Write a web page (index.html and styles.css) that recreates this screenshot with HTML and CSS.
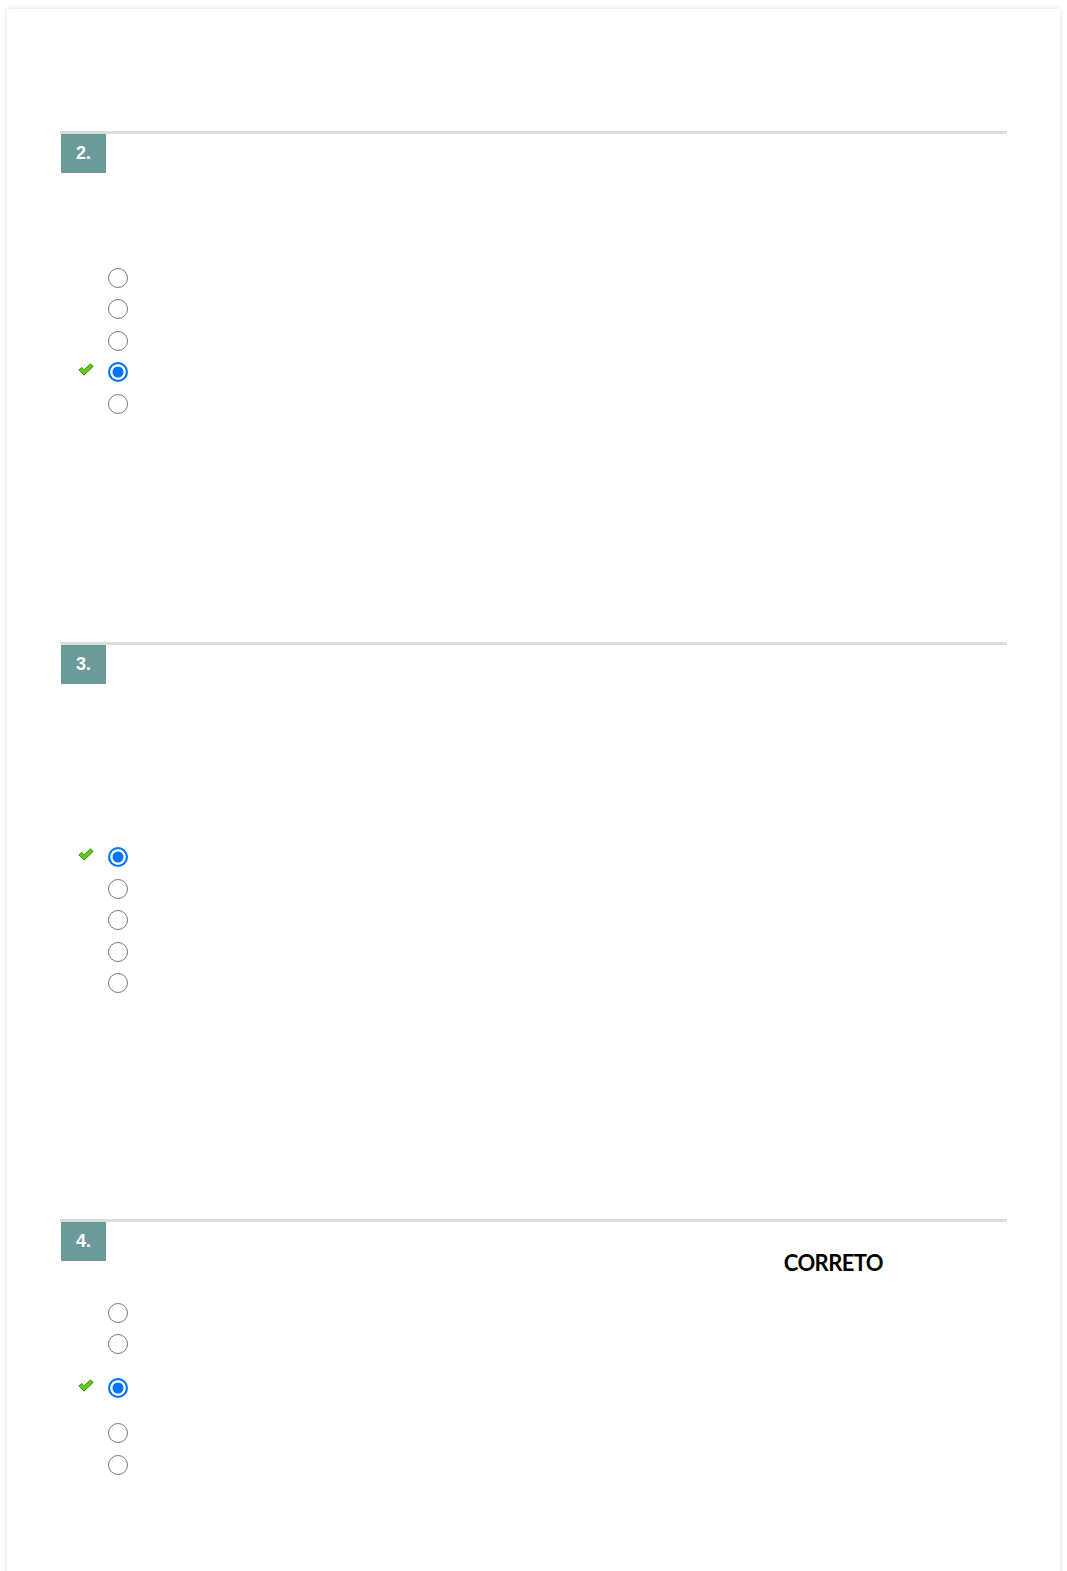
FILE: index.html
```html
<!DOCTYPE html>
<html lang="pt">
<head>
    <meta charset="UTF-8">
    <meta name="viewport" content="width=device-width, initial-scale=1.0">
    <title>Questionário</title>
    <link rel="stylesheet" href="styles.css">
</head>
<body>
    <div class="sheet">

        <!-- questão 2 -->
        <div class="question q2">
            <div class="question-head">
                <span class="badge">2.</span>
            </div>
            <div class="prompt"></div>
            <div class="options">
                <div class="option"><span class="mark"></span><span class="radio"></span></div>
                <div class="option"><span class="mark"></span><span class="radio"></span></div>
                <div class="option"><span class="mark"></span><span class="radio"></span></div>
                <div class="option">
                    <span class="mark">
                        <svg width="16" height="13" viewBox="0 0 16 13"><path d="M0.8 7 L3.6 4.4 L6.2 6.9 L12.4 0.9 L15.2 3.4 L6.2 12 Z" fill="#5fcf16" stroke="#3b8a0c" stroke-width="1" stroke-linejoin="round"/></svg>
                    </span>
                    <span class="radio checked"></span>
                </div>
                <div class="option"><span class="mark"></span><span class="radio"></span></div>
            </div>
        </div>

        <!-- questão 3 -->
        <div class="question q3">
            <div class="question-head">
                <span class="badge">3.</span>
            </div>
            <div class="prompt"></div>
            <div class="options">
                <div class="option">
                    <span class="mark">
                        <svg width="16" height="13" viewBox="0 0 16 13"><path d="M0.8 7 L3.6 4.4 L6.2 6.9 L12.4 0.9 L15.2 3.4 L6.2 12 Z" fill="#5fcf16" stroke="#3b8a0c" stroke-width="1" stroke-linejoin="round"/></svg>
                    </span>
                    <span class="radio checked"></span>
                </div>
                <div class="option"><span class="mark"></span><span class="radio"></span></div>
                <div class="option"><span class="mark"></span><span class="radio"></span></div>
                <div class="option"><span class="mark"></span><span class="radio"></span></div>
                <div class="option"><span class="mark"></span><span class="radio"></span></div>
            </div>
        </div>

        <!-- questão 4 -->
        <div class="question q4">
            <div class="question-head">
                <span class="badge">4.</span>
                <span class="status">CORRETO</span>
            </div>
            <div class="prompt"></div>
            <div class="options">
                <div class="option"><span class="mark"></span><span class="radio"></span></div>
                <div class="option"><span class="mark"></span><span class="radio"></span></div>
                <div class="option tall">
                    <span class="mark">
                        <svg width="16" height="13" viewBox="0 0 16 13"><path d="M0.8 7 L3.6 4.4 L6.2 6.9 L12.4 0.9 L15.2 3.4 L6.2 12 Z" fill="#5fcf16" stroke="#3b8a0c" stroke-width="1" stroke-linejoin="round"/></svg>
                    </span>
                    <span class="radio checked"></span>
                </div>
                <div class="option"><span class="mark"></span><span class="radio"></span></div>
                <div class="option"><span class="mark"></span><span class="radio"></span></div>
            </div>
        </div>

    </div>
</body>
</html>
```

FILE: styles.css
```css
body {
    margin: 0;
    background-color: #ffffff;
    font-family: Lato, "Liberation Sans", sans-serif;
}

.sheet {
    margin: 9px 7px 0;
    padding: 122px 53px 90px;
    min-height: 1400px;
    background-color: #ffffff;
    box-shadow: 0 0 5px rgba(0, 0, 0, 0.14);
}

.question {
    border-top: 3px solid #dcdcdc;
}

.question-head {
    display: flex;
    align-items: flex-start;
}

.badge {
    width: 45px;
    height: 39px;
    margin-left: 1px;
    display: flex;
    justify-content: center;
    align-items: center;
    background-color: #6a9b99;
    color: #ffffff;
    font-family: "Liberation Sans", Arial, sans-serif;
    font-weight: bold;
    font-size: 18px;
}

.status {
    margin-left: auto;
    margin-right: 124px;
    margin-top: 29px;
    line-height: 24px;
    font-size: 22px;
    font-weight: bold;
    color: #000000;
    letter-spacing: -0.6px;
}

.q2 .prompt {
    height: 89px;
}

.q2 {
    margin-bottom: 222px;
}

.q3 .prompt {
    height: 158px;
}

.q3 {
    margin-bottom: 220px;
}

.q4 .prompt {
    height: 22px;
}

.option {
    display: flex;
    align-items: center;
    height: 31.5px;
    padding-left: 19px;
}

.option.tall {
    margin-top: 12.5px;
    margin-bottom: 13.5px;
}

.mark {
    width: 29px;
    height: 14px;
    display: flex;
    align-items: flex-start;
    margin-top: -4px;
    margin-left: -1px;
    margin-right: 1px;
}

.radio {
    width: 20px;
    height: 20px;
    box-sizing: border-box;
    border: 1.5px solid #767676;
    border-radius: 50%;
    background-color: #ffffff;
}

.radio.checked {
    border: 2px solid #0075ff;
    box-shadow: inset 0 0 0 2.5px #ffffff;
    background-color: #0075ff;
}
```
